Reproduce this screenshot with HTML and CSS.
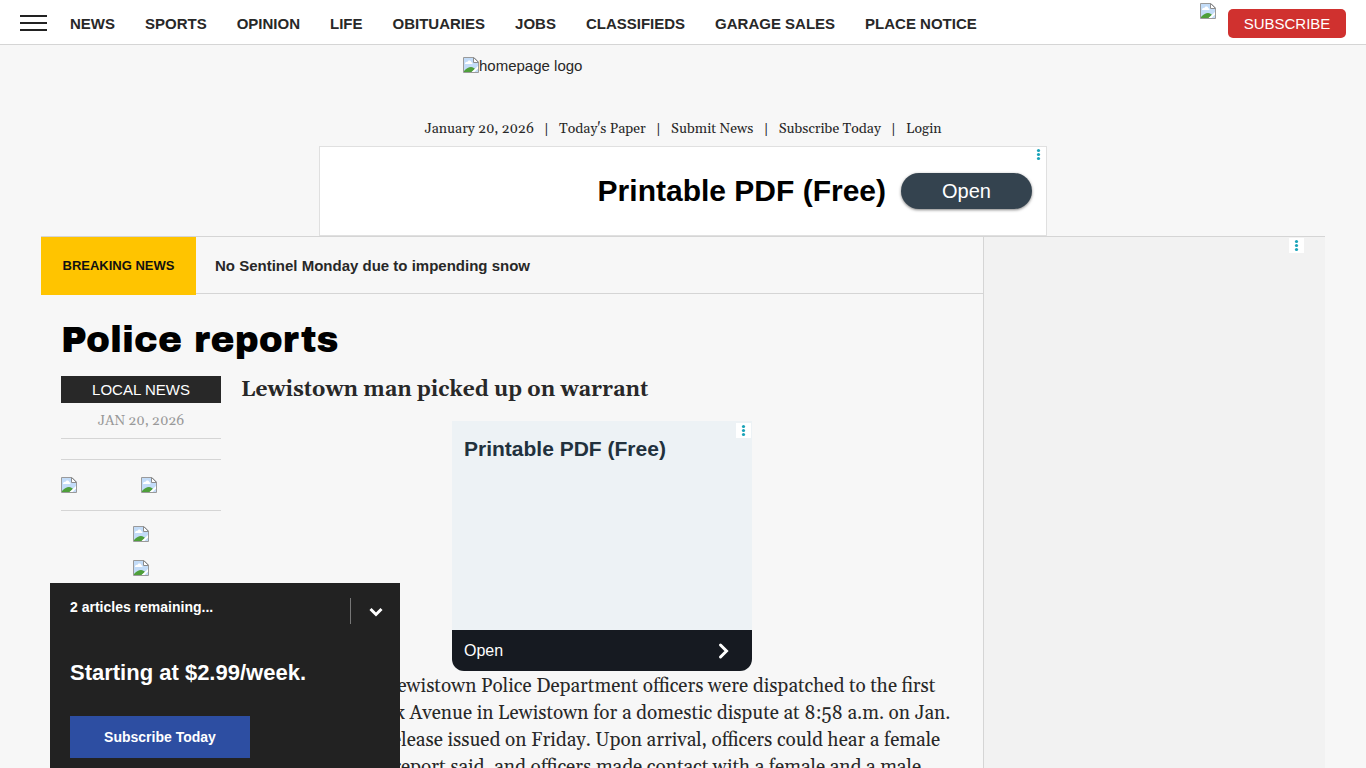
FILE: index.html
```html
<!DOCTYPE html>
<html lang="en">
<head>
<meta charset="utf-8">
<title>Police reports</title>
<link rel="stylesheet" href="styles.css">
</head>
<body>
<svg class="defs" aria-hidden="true">
  <symbol id="missing" viewBox="0 0 16 16">
    <path d="M.5 .5H11L15.500 5V15.500H.5Z" fill="#c3dcf8"/>
    <path d="M2 7C2 5 4 4.500 4.500 5C5 3 8 3 8.300 5.200C9.500 5.300 9.800 6.500 9.300 7Z" fill="#fff"/>
    <path d="M1 15V14C4 11 5.500 10 8 10C10 10 11 11 12 12L9 15Z" fill="#4e9f3a"/>
    <path d="M.5 15.500V.5H11L15.500 5V15.500Z" fill="none" stroke="#9a9a9a"/>
    <path d="M10.500 .5V5.500H15.500Z" fill="#fff" stroke="#8c8c8c"/>
    <path d="M8.500 15L15 9V11.500L11.500 15Z" fill="#fff"/>
  </symbol>
  <symbol id="dots" viewBox="0 0 15 15">
    <rect width="15" height="15" fill="#fff"/>
    <g fill="#1aa3b8"><circle cx="7.500" cy="3.500" r="1.600"/><circle cx="7.500" cy="7.500" r="1.600"/><circle cx="7.500" cy="11.500" r="1.600"/></g>
  </symbol>
</svg>
<div class="page">
  <header class="topbar">
    <button class="menu" type="button" aria-label="Menu"><span></span><span></span><span></span></button>
    <nav class="nav">
      <a href="#">NEWS</a><a href="#">SPORTS</a><a href="#">OPINION</a><a href="#">LIFE</a><a href="#">OBITUARIES</a><a href="#">JOBS</a><a href="#">CLASSIFIEDS</a><a href="#">GARAGE SALES</a><a href="#">PLACE NOTICE</a>
    </nav>
    <svg class="missing account"><use href="#missing"/></svg>
    <button class="subscribe" type="button">SUBSCRIBE</button>
  </header>

  <div class="brand"><a href="#"><svg class="missing"><use href="#missing"/></svg><span>homepage logo</span></a></div>
  <div class="links">
    <span>January 20, 2026</span><i>|</i><a href="#">Today's Paper</a><i>|</i><a href="#">Submit News</a><i>|</i><a href="#">Subscribe Today</a><i>|</i><a href="#">Login</a>
  </div>
  <aside class="banner">
    <svg class="dots"><use href="#dots"/></svg>
    <strong>Printable PDF (Free)</strong>
    <button type="button">Open</button>
  </aside>

  <main class="main">
    <div class="content">
      <div class="breaking"><b>BREAKING NEWS</b><a href="#">No Sentinel Monday due to impending snow</a></div>
      <article class="article">
        <h1>Police reports</h1>
        <div class="columns">
          <div class="meta">
            <a class="section" href="#">LOCAL NEWS</a>
            <time>JAN 20, 2026</time>
            <div class="share"><svg class="missing"><use href="#missing"/></svg><svg class="missing"><use href="#missing"/></svg></div>
            <div class="tools"><svg class="missing"><use href="#missing"/></svg><svg class="missing"><use href="#missing"/></svg></div>
          </div>
          <div class="story">
            <h2>Lewistown man picked up on warrant</h2>
            <aside class="card">
              <svg class="dots"><use href="#dots"/></svg>
              <h3>Printable PDF (Free)</h3>
              <button type="button">Open<svg viewBox="0 0 16 20"><path d="M4.500 4L10.500 10L4.500 16" fill="none" stroke="#fff" stroke-width="3" stroke-linecap="round"/></svg></button>
            </aside>
            <p>LEWISTOWN — Lewistown Police Department officers were dispatched to the first<br>block of South Park Avenue in Lewistown for a domestic dispute at 8:58 a.m. on Jan.<br>11 according to a release issued on Friday. Upon arrival, officers could hear a female<br>yelling inside, the report said, and officers made contact with a female and a male.</p>
          </div>
        </div>
      </article>
    </div>
    <aside class="rail"><svg class="dots"><use href="#dots"/></svg></aside>
  </main>
</div>

<section class="offer">
  <div class="offer-top"><span>2 articles remaining...</span>
    <button type="button" aria-label="Collapse"><svg viewBox="0 0 14 10"><path d="M1.500 2L7 7.500L12.500 2" fill="none" stroke="#fff" stroke-width="3"/></svg></button>
  </div>
  <h2>Starting at $2.99/week.</h2>
  <button class="offer-cta" type="button">Subscribe Today</button>
</section>
</body>
</html>
```
FILE: styles.css
```css
* { box-sizing: border-box; }
body {
  margin: 0;
  background: #f7f7f7;
  color: #282828;
  font-family: "Liberation Sans", Arial, sans-serif;
  font-size: 15px;
}
a { color: inherit; text-decoration: none; }
button { font-family: inherit; border: 0; padding: 0; cursor: pointer; }
h1, h2, h3, p { margin: 0; }
.defs { position: absolute; width: 0; height: 0; }
.missing { width: 16px; height: 16px; display: block; flex: none; }
.dots { width: 15px; height: 15px; display: block; }

.page { height: 100vh; overflow: hidden; display: flex; flex-direction: column; }

.topbar {
  flex: none;
  height: 45px;
  padding: 0 20px;
  display: flex;
  align-items: center;
  background: #fff;
  border-bottom: 1px solid #d5d5d5;
}
.menu { width: 27px; margin-top: 2px; display: flex; flex-direction: column; gap: 5px; background: none; }
.menu span { height: 2px; background: #222; }
.nav { display: flex; gap: 30px; margin-left: 23px; font-weight: bold; line-height: 18px; padding-top: 4px; white-space: nowrap; }
.account { margin: 3px 12px 0 auto; align-self: flex-start; }
.subscribe { width: 118px; height: 29px; margin-top: 2px; border-radius: 5px; background: #d0312f; color: #fff; font-size: 15px; }

.brand { flex: none; width: 440px; height: 72px; margin: 0 auto; padding-top: 12px; }
.brand a { display: flex; line-height: 18px; }
.links {
  flex: none;
  display: flex;
  justify-content: center;
  gap: 10px;
  height: 29px;
  line-height: 24px;
  font-family: Georgia, Gelasio, "Liberation Serif", serif;
  font-size: 14px;
}
.links i { font-style: normal; }

.banner {
  flex: none;
  position: relative;
  width: 728px;
  height: 90px;
  margin: 0 auto;
  padding-right: 14px;
  display: flex;
  align-items: center;
  justify-content: flex-end;
  gap: 15px;
  background: #fff;
  border: 1px solid #e0e0e0;
  color: #000;
}
.banner strong { font-size: 30px; }
.banner button { width: 131px; height: 36px; border-radius: 18px; background: #34434f; color: #fff; font-size: 20px; box-shadow: 0 1px 3px rgba(0, 0, 0, .5); }
.banner .dots { position: absolute; top: 0; right: 0; }

.main { flex: 1; min-height: 0; margin: 0 41px; display: flex; border-top: 1px solid #d5d5d5; }
.content { flex: 1; min-width: 0; }
.rail { flex: none; width: 342px; padding: 1px 0 0 305px; border-left: 1px solid #d5d5d5; background: #f2f2f2; }

.breaking { height: 57px; display: flex; align-items: center; border-bottom: 1px solid #d5d5d5; font-weight: bold; }
.breaking b { width: 155px; height: 58px; align-self: flex-start; line-height: 58px; text-align: center; background: #ffc400; color: #111; font-size: 13px; }
.breaking a { margin-left: 19px; }

.article { padding: 20px; }
h1 { font-family: "Arial Black", "Archivo Black", Inter, sans-serif; font-weight: 400; font-size: 36px; line-height: 52px; color: #000; }
.columns { display: flex; gap: 20px; padding-top: 10px; }
.meta { flex: none; width: 160px; text-align: center; }
.section { display: block; height: 27px; line-height: 27px; background: #282828; color: #fff; font-size: 15px; }
.meta time { display: block; height: 36px; line-height: 37px; border-bottom: 1px solid #d5d5d5; color: #999; font-family: Georgia, Gelasio, "Liberation Serif", serif; font-size: 14px; }
.share { display: grid; grid-template-columns: 1fr 1fr; margin-top: 20px; padding: 17px 0; border: solid #d5d5d5; border-width: 1px 0; }
.tools { display: flex; flex-direction: column; align-items: center; gap: 18px; padding-top: 15px; }

.story { flex: 1; min-width: 0; font-family: Georgia, Gelasio, "Liberation Serif", serif; }
.story h2 { font-size: 21px; line-height: 29px; }
.story p { font-size: 19px; line-height: 27px; padding-top: 2px; white-space: nowrap; }
.card {
  position: relative;
  width: 300px;
  height: 250px;
  margin: 16px auto 0;
  display: flex;
  flex-direction: column;
  justify-content: space-between;
  overflow: hidden;
  border-radius: 0 0 12px 12px;
  background: #edf2f5;
  font-family: "Liberation Sans", Arial, sans-serif;
}
.card .dots { position: absolute; top: 2px; right: 1px; }
.card h3 { padding: 15px 12px; font-size: 21px; line-height: 26px; color: #22313d; }
.card button { height: 41px; padding: 0 20px 0 12px; display: flex; align-items: center; justify-content: space-between; background: #161a21; color: #fff; font-size: 16px; }
.card button svg { width: 16px; height: 20px; }

.offer { position: fixed; left: 50px; bottom: 0; width: 350px; height: 185px; padding: 15px 0 0 20px; background: #222; color: #fff; }
.offer-top { display: flex; justify-content: space-between; font-size: 14px; font-weight: bold; line-height: 18px; }
.offer-top button { width: 50px; height: 26px; padding-top: 2px; border-left: 1px solid #777; background: none; }
.offer-top svg { width: 14px; height: 10px; }
.offer h2 { margin-top: 35px; font-size: 22px; line-height: 28px; }
.offer-cta { width: 180px; height: 42px; margin-top: 29px; background: #2d4ea2; color: #fff; font-size: 14px; font-weight: bold; }
```
